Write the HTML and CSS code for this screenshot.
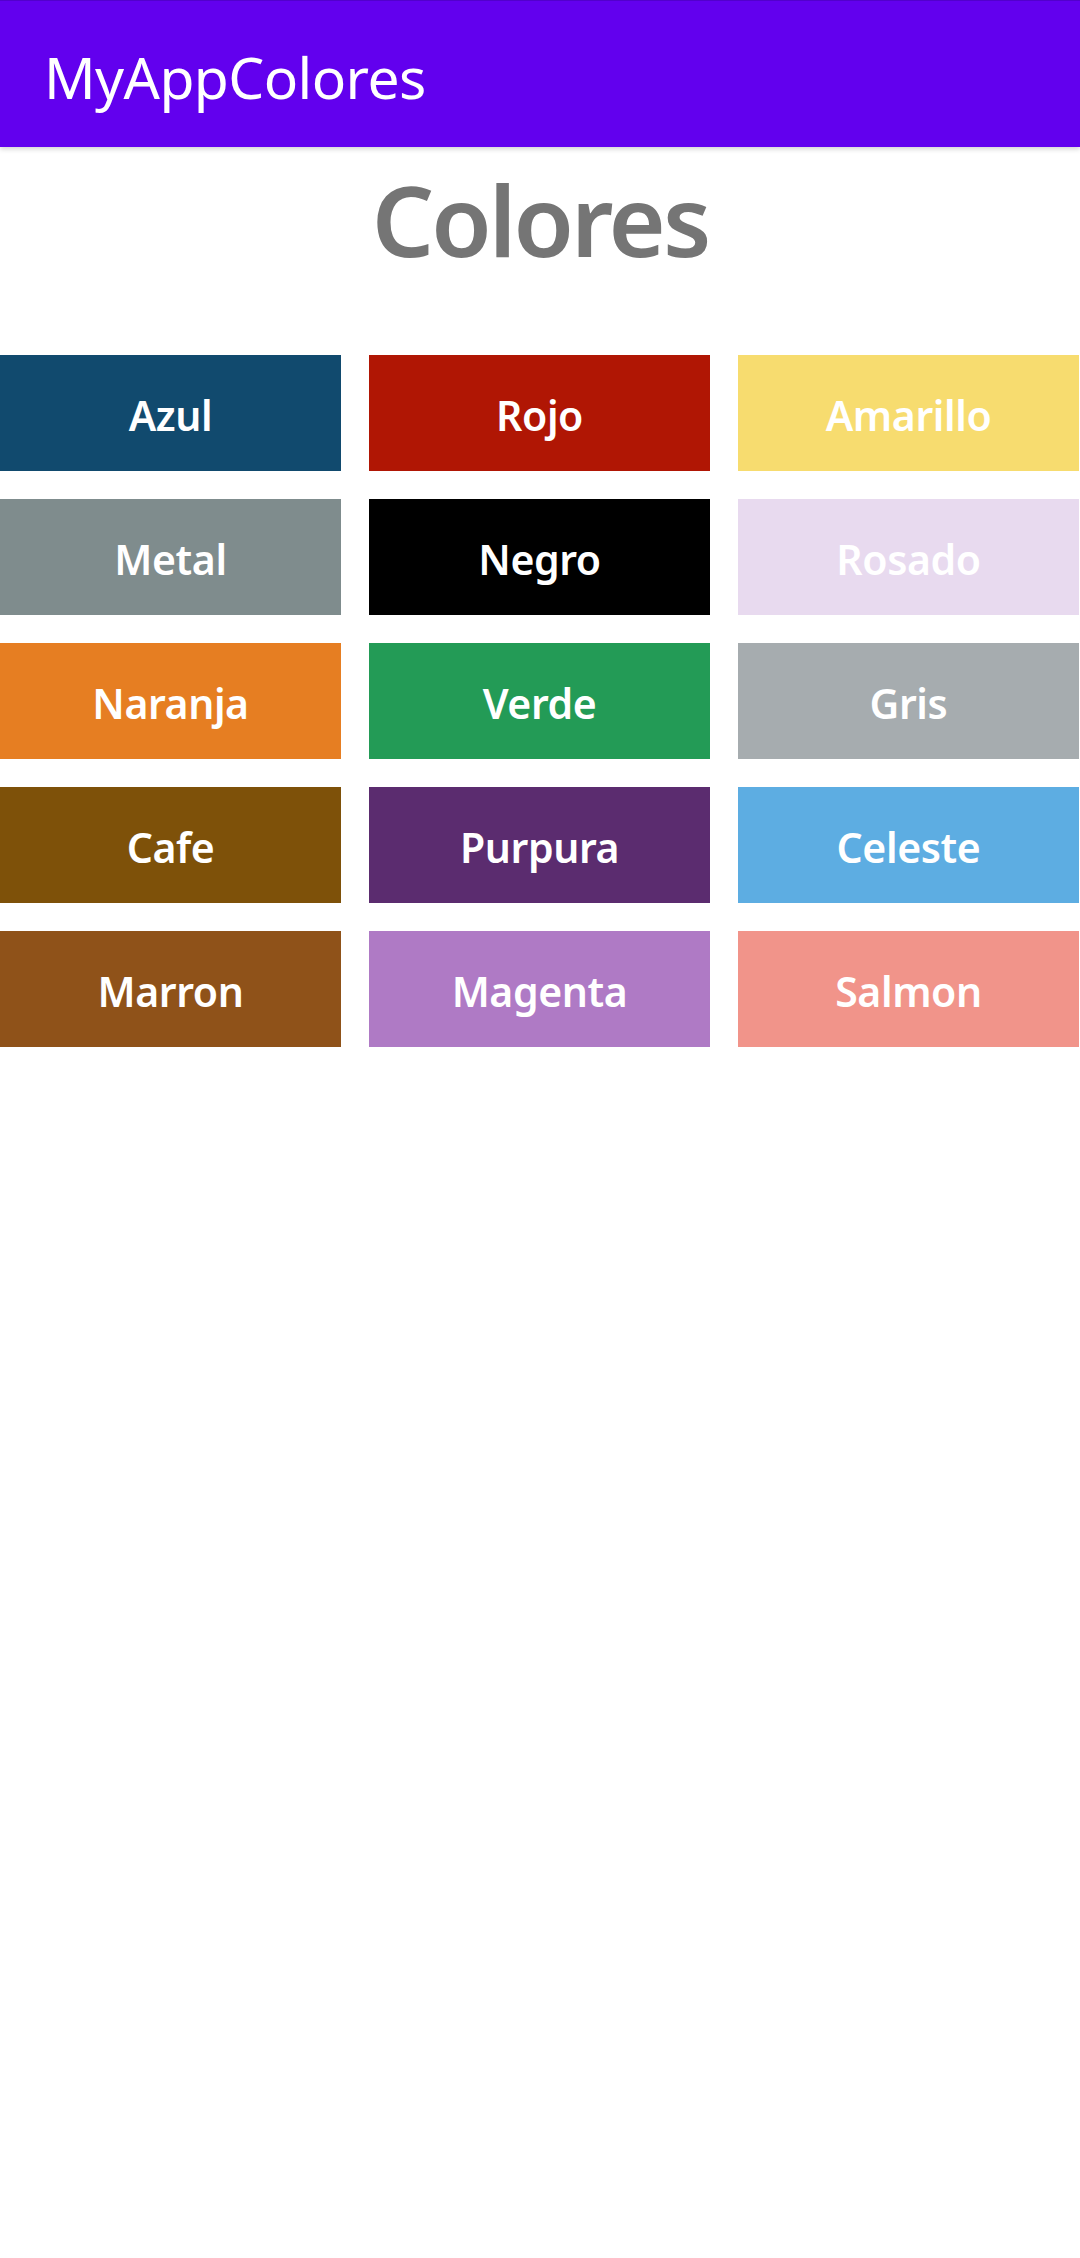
FILE: index.html
```html
<!DOCTYPE html>
<html lang="es">
<head>
<meta charset="utf-8">
<title>MyAppColores</title>
<link rel="stylesheet" href="styles.css">
</head>
<body>
<header class="appbar">
  <span class="appbar-title">MyAppColores</span>
</header>
<main class="content">
  <h1 class="heading">Colores</h1>
  <div class="grid">
    <div class="swatch azul">Azul</div>
    <div class="swatch rojo">Rojo</div>
    <div class="swatch amarillo">Amarillo</div>
    <div class="swatch metal">Metal</div>
    <div class="swatch negro">Negro</div>
    <div class="swatch rosado">Rosado</div>
    <div class="swatch naranja">Naranja</div>
    <div class="swatch verde">Verde</div>
    <div class="swatch gris">Gris</div>
    <div class="swatch cafe">Cafe</div>
    <div class="swatch purpura">Purpura</div>
    <div class="swatch celeste">Celeste</div>
    <div class="swatch marron">Marron</div>
    <div class="swatch magenta">Magenta</div>
    <div class="swatch salmon">Salmon</div>
  </div>
</main>
</body>
</html>
```
FILE: styles.css
```css
html, body {
  margin: 0;
  padding: 0;
  background: #ffffff;
}
body {
  width: 1080px;
  min-height: 2258px;
  font-family: "Noto Sans", "Open Sans", sans-serif;
}
.appbar {
  position: relative;
  z-index: 1;
  height: 147px;
  box-sizing: border-box;
  background: #6200ee;
  border-top: 1px solid #5200cc;
  display: flex;
  align-items: center;
  padding-left: 44px;
  padding-top: 6px;
  box-shadow: 0 2px 5px rgba(0, 0, 0, 0.18);
}
.appbar-title {
  color: #ffffff;
  font-size: 57px;
  font-weight: 400;
  letter-spacing: -0.6px;
  line-height: 1;
}
.content {
  display: flex;
  flex-direction: column;
}
.heading {
  margin: 0;
  height: 208px;
  box-sizing: border-box;
  padding-top: 12px;
  text-align: center;
  font-size: 98px;
  line-height: 120px;
  font-weight: 600;
  color: #757575;
  letter-spacing: -3px;
}
.grid {
  display: grid;
  grid-template-columns: repeat(3, 341px);
  grid-auto-rows: 116px;
  column-gap: 28px;
  row-gap: 28px;
}
.swatch {
  display: flex;
  align-items: center;
  justify-content: center;
  box-sizing: border-box;
  padding-top: 3px;
  color: #ffffff;
  font-size: 41px;
  font-weight: 600;
  letter-spacing: -0.4px;
}
.azul { background: #114a6e; }
.rojo { background: #b01604; }
.amarillo { background: #f7dc6f; }
.metal { background: #7f8c8d; }
.negro { background: #000000; }
.rosado { background: #e8daef; }
.naranja { background: #e67e22; }
.verde { background: #239b56; }
.gris { background: #a6acaf; }
.cafe { background: #7e5109; }
.purpura { background: #5b2c6f; }
.celeste { background: #5dade2; }
.marron { background: #8f5219; }
.magenta { background: #af7ac5; }
.salmon { background: #f1948a; }
```
